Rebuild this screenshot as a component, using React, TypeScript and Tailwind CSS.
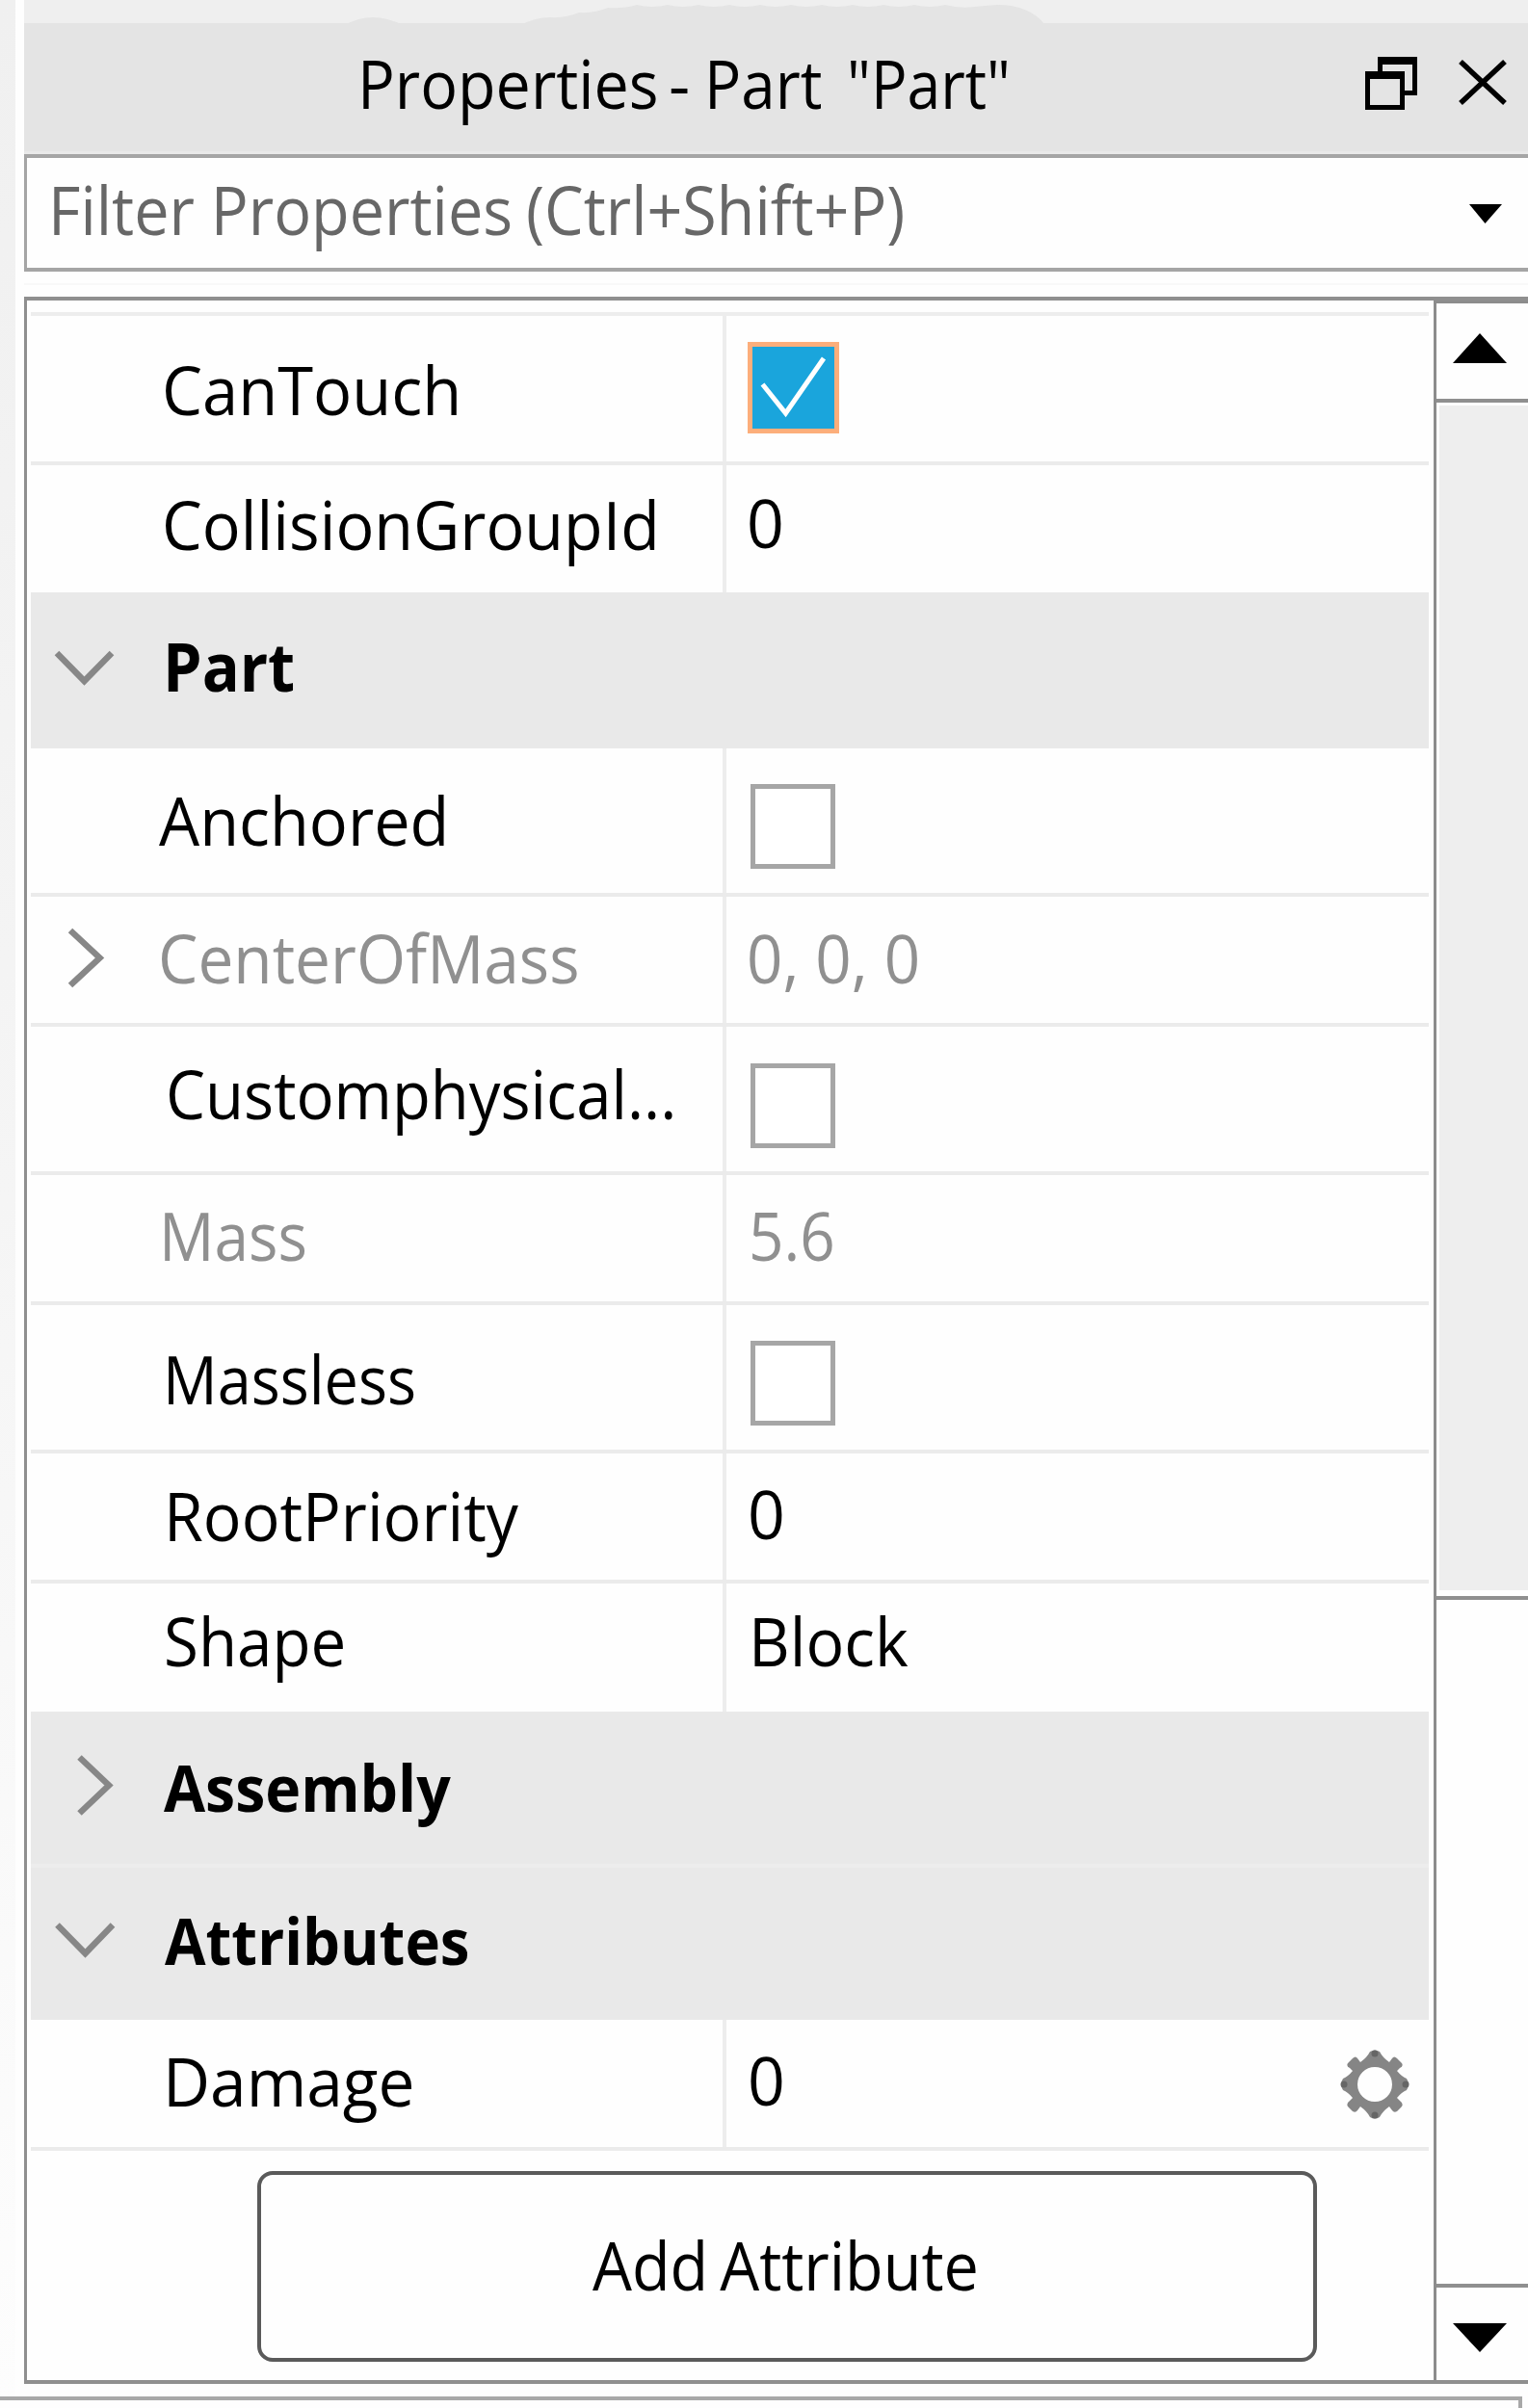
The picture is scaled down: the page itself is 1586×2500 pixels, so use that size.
import React from "react";

const TEXT = "inline-block shrink-0 origin-left whitespace-pre text-[69px] leading-[80px]";

type Row = {
  height: string;
  name: string;
  nameClass: string;
  muted?: boolean;
  icon?: React.ReactNode;
  value?: string;
  valueClass?: string;
  check?: "on" | "off";
  gear?: boolean;
  last?: boolean;
};

/* Polyline arrow drawn in the gutter that precedes a property name. */
function Arrow({ points }: { points: string }) {
  return (
    <svg viewBox="0 0 134 130" className="h-[130px] w-[134px]" fill="none" stroke="#878787" strokeWidth="6.5">
      <polyline points={points} />
    </svg>
  );
}

function CheckBox({ on, className }: { on: boolean; className: string }) {
  if (on) {
    return (
      <div className={`h-[95px] w-[95px] shrink-0 border-[5px] border-[#fcae7b] bg-[#1aa5dc] ${className}`}>
        <svg viewBox="0 0 85 85" className="h-full w-full" fill="none" stroke="#ffffff" strokeWidth="5">
          <polyline points="10.5,39 34.5,69 74,12" />
        </svg>
      </div>
    );
  }
  return <div className={`h-[88px] w-[88px] shrink-0 border-[5px] border-[#a6a6a6] bg-white ${className}`} />;
}

function Gear() {
  return (
    <svg viewBox="-36 -36 72 72" className="mt-[31px] mr-[20px] ml-auto h-[72px] w-[72px] shrink-0">
      <path
        fill="#858585"
        fillRule="evenodd"
        d="M-5-34Q0-37 5-34Q8-28 15-23L18-27Q20-30 23-27L28-22Q30-19 26-17L23-14Q28-8 33-6Q37 0 33 6Q28 8 23 14L26 17Q30 20 28 23L23 28Q20 30 18 27L15 23Q8 28 5 34Q0 37-5 34Q-8 28-15 23L-18 27Q-20 30-23 28L-28 23Q-30 20-26 17L-23 14Q-28 8-33 6Q-37 0-33-6Q-28-8-23-14L-26-17Q-30-19-28-22L-23-27Q-20-30-18-27L-15-23Q-8-28-5-34ZM18 0A18 18 0 1 0-18 0A18 18 0 1 0 18 0Z"
      />
      <g fill="#666666">
        <circle cx="0" cy="-32" r="3.5" />
        <circle cx="0" cy="32" r="3.5" />
        <circle cx="-32" cy="0" r="3.5" />
        <circle cx="32" cy="0" r="3.5" />
      </g>
    </svg>
  );
}

function PropertyRow({ row }: { row: Row }) {
  const tone = row.muted ? "text-[#909090]" : "text-black";
  return (
    <div className={`flex ${row.height} ${row.last ? "" : "border-b-[4px] border-[#ebebeb]"} ${tone}`}>
      <div className="flex w-[718px] shrink-0 items-start">
        <div className="w-[134px] shrink-0">{row.icon}</div>
        <span className={`${TEXT} ${row.nameClass}`}>{row.name}</span>
      </div>
      <div className="flex grow items-start border-l-[4px] border-[#ededed]">
        {row.check && <CheckBox on={row.check === "on"} className={row.valueClass ?? ""} />}
        {row.value && <span className={`${TEXT} ${row.valueClass}`}>{row.value}</span>}
        {row.gear && <Gear />}
      </div>
    </div>
  );
}

function SectionRow({ height, name, nameClass, points }: { height: string; name: string; nameClass: string; points: string }) {
  return (
    <div className={`flex items-start bg-[#e9e9e9] ${height}`}>
      <div className="w-[134px] shrink-0">
        <Arrow points={points} />
      </div>
      <span className={`inline-block origin-left whitespace-pre leading-[80px] font-bold text-black ${nameClass}`}>{name}</span>
    </div>
  );
}

const physics: Row[] = [
  { height: "h-[155px]", name: "CanTouch", nameClass: "mt-[36px] ml-[2px] scale-x-[0.969]", check: "on", valueClass: "mt-[27px] ml-[22px]" },
  { height: "h-[132px]", name: "CollisionGroupId", nameClass: "mt-[21px] ml-[2px] scale-x-[0.962]", value: "0", valueClass: "mt-[19px] ml-[21px] scale-x-[0.984]", last: true },
];

const part: Row[] = [
  { height: "h-[154px]", name: "Anchored", nameClass: "mt-[34px] ml-[-1px] scale-x-[0.966]", check: "off", valueClass: "mt-[37px] ml-[25px]" },
  {
    height: "h-[135px]",
    name: "CenterOfMass",
    nameClass: "mt-[23px] ml-[-2px] scale-x-[0.953]",
    muted: true,
    icon: <Arrow points="41,35 71.5,63.5 41,92" />,
    value: "0, 0, 0",
    valueClass: "mt-[23px] ml-[21px] scale-x-[0.948]",
  },
  { height: "h-[154px]", name: "Customphysical...", nameClass: "mt-[29px] ml-[6px] scale-x-[0.945]", check: "off", valueClass: "mt-[38px] ml-[25px]" },
  { height: "h-[135px]", name: "Mass", nameClass: "mt-[22px] ml-[-1px] scale-x-[0.927]", muted: true, value: "5.6", valueClass: "mt-[22px] ml-[23px] scale-x-[0.925]" },
  { height: "h-[154px]", name: "Massless", nameClass: "mt-[36px] ml-[3px] scale-x-[0.913]", check: "off", valueClass: "mt-[37px] ml-[25px]" },
  { height: "h-[135px]", name: "RootPriority", nameClass: "mt-[24px] ml-[4px] scale-x-[0.959]", value: "0", valueClass: "mt-[22px] ml-[22px] scale-x-[0.984]" },
  { height: "h-[133px]", name: "Shape", nameClass: "mt-[19px] ml-[4px] scale-x-[0.949]", value: "Block", valueClass: "mt-[19px] ml-[23px] scale-x-[0.959]", last: true },
];

const attributes: Row[] = [
  { height: "h-[136px]", name: "Damage", nameClass: "mt-[23px] ml-[3px] scale-x-[0.98]", value: "0", valueClass: "mt-[22px] ml-[22px] scale-x-[0.984]", gear: true },
];

function TitleBar() {
  return (
    <header className="relative h-[160px] bg-[#efefef] pt-[24px]">
      <div className="h-[136px] bg-[#e4e4e4]" />
      <svg viewBox="0 0 1561 160" className="absolute inset-0 h-[160px] w-[1561px]">
        <path
          fill="#e4e4e4"
          d="M333 26Q361 10 393 26ZM516 26Q530 18 546 18Q562 19 576 13Q592 14 606 8Q622 9 636 5Q652 9 668 5Q684 9 700 5Q716 9 732 5Q748 9 764 5Q780 9 796 5Q812 9 828 5Q844 9 860 5Q876 9 892 5Q908 9 924 5Q940 9 956 5Q972 9 986 7L1010 5Q1044 5 1060 26Z"
        />
        <rect x="0" y="157" width="1561" height="3" fill="#e9e9e9" />
        <g fill="#000000">
          <path d="M1405 59h41v40h-13v-5h8V67h-31v7h-5z" />
          <path fillRule="evenodd" d="M1392 74h41v40h-41zM1397 82v27h31V82z" />
        </g>
        <path d="M1491 64L1537 107M1537 64L1491 107" stroke="#000000" strokeWidth="5.5" />
      </svg>
      <div className="absolute top-[46px] left-[346px] flex text-black">
        <span className={`${TEXT} w-[323px] scale-x-[0.936]`}>Properties</span>
        <span className={`${TEXT} w-[37px]`}>-</span>
        <span className={`${TEXT} w-[148px] scale-x-[0.923]`}>Part</span>
        <span className={`${TEXT} scale-x-[0.906]`}>"Part"</span>
      </div>
    </header>
  );
}

function FilterBox() {
  return (
    <div className="flex h-[122px] items-start border-y-[4px] border-l-[3px] border-[#a5a5a5] bg-[#fefefe]">
      <div className="flex pt-[13px] pl-[22px] text-[#676767]">
        <div className="w-[496px] shrink-0">
          <span className={`${TEXT} scale-x-[0.938]`}>Filter Properties</span>
        </div>
        <span className={`${TEXT} scale-x-[0.936]`}>(Ctrl+Shift+P)</span>
      </div>
      <svg viewBox="0 0 34 20" className="mt-[48px] mr-[27px] ml-auto h-[20px] w-[34px] shrink-0">
        <path d="M0 0H34L16.5 20z" />
      </svg>
    </div>
  );
}

function Scrollbar() {
  return (
    <div className="flex w-[98px] shrink-0 flex-col border-t-[3px] border-l-[3px] border-[#8c8c8c] bg-[#fefefe]">
      <div className="flex h-[103px] items-start border-b-[4px] border-[#8f8f8f] pt-[31px] pl-[17px]">
        <svg viewBox="0 0 56 31" className="h-[31px] w-[56px]">
          <path d="M28 0L56 31H0z" />
        </svg>
      </div>
      <div className="h-[1243px] border-b-[4px] border-[#8f8f8f] pt-[3px] pb-[6px] pl-[3px]">
        <div className="h-full bg-[#eeeeee]" />
      </div>
      <div className="h-[714px] border-b-[4px] border-[#8f8f8f]" />
      <div className="flex grow items-start pt-[37px] pl-[17px]">
        <svg viewBox="0 0 56 30" className="h-[30px] w-[56px]">
          <path d="M0 0H56L28 30z" />
        </svg>
      </div>
    </div>
  );
}

export default function App() {
  return (
    <div className="flex h-[2500px] w-[1586px] flex-col overflow-hidden bg-[#fefefe] font-['Open_Sans',sans-serif]">
      <div className="flex h-[2488px] shrink-0">
        <div className="w-[16px] shrink-0 bg-linear-to-b from-[#f0f0f0] via-[#f5f5f5] to-[#fdfdfd]" />
        <div className="w-[9px] shrink-0" />
        <div className="flex w-[1561px] shrink-0 flex-col">
          <TitleBar />
          <FilterBox />
          <div className="flex h-[26px] flex-col justify-center">
            <div className="h-[2px] bg-[#f8f8f8]" />
          </div>
          <div className="flex h-[2167px] border-y-[4px] border-l-[3px] border-[#8f8f8f] bg-[#fefefe]">
            <div className="flex grow flex-col pl-[4px]">
              <div className="mr-[5px] flex flex-col">
                <div className="h-[16px] border-b-[4px] border-[#ededed]" />
                {physics.map((row) => (
                  <PropertyRow key={row.name} row={row} />
                ))}
                <SectionRow height="h-[162px]" name="Part" nameClass="mt-[36px] ml-[3px] text-[69px] scale-x-[0.938]" points="27,63 55.5,92 84,63" />
                {part.map((row) => (
                  <PropertyRow key={row.name} row={row} />
                ))}
                <SectionRow height="h-[158px]" name="Assembly" nameClass="mt-[38px] ml-[4px] text-[66px] scale-x-[0.947]" points="50.5,47.5 81,76.5 50.5,105.5" />
                <div className="h-[4px] bg-[#ededed]" />
                <SectionRow height="h-[158px]" name="Attributes" nameClass="mt-[35px] ml-[5px] text-[66px] scale-x-[0.935]" points="27.5,59.5 56.5,89 85,59.5" />
                {attributes.map((row) => (
                  <PropertyRow key={row.name} row={row} />
                ))}
              </div>
              <button className="mt-[21px] ml-[235px] flex h-[198px] w-[1100px] items-start rounded-[16px] border-[4px] border-[#5a5a5a] bg-[#fefefe] text-black">
                <span className={`${TEXT} mt-[53px] ml-[344px] scale-x-[0.938] [word-spacing:-5px]`}>Add Attribute</span>
              </button>
            </div>
            <Scrollbar />
          </div>
        </div>
      </div>
      <div className="h-[12px] w-[1580px] border-t-[4px] border-r-[4px] border-[#a8a8a8]" />
    </div>
  );
}
